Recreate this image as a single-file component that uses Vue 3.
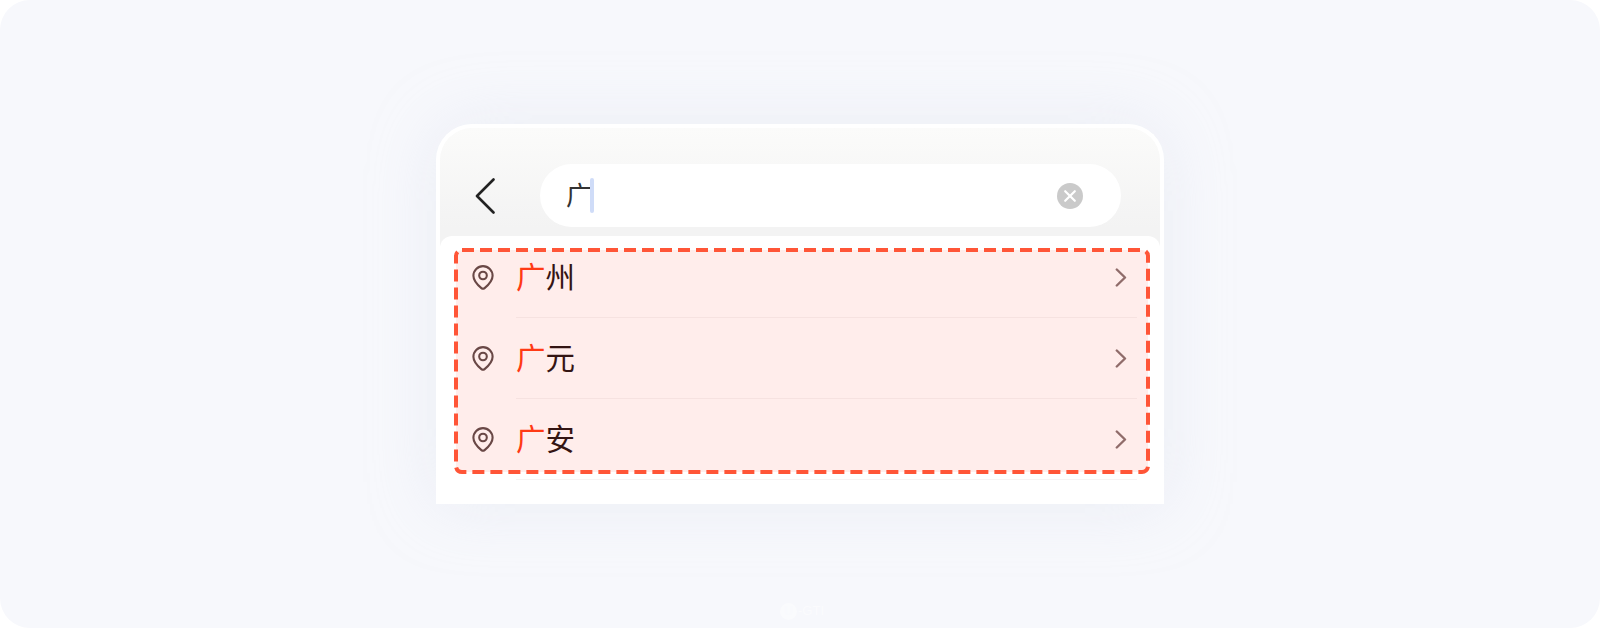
<template>
  <div class="stage">
    <div class="card">
      <div class="search-bar">
        <svg class="back" width="20" height="36" viewBox="0 0 20 36">
          <path d="M18.5 1.500 2 18l16.500 16.500" fill="none" stroke="#222" stroke-width="2.600" stroke-linecap="round" stroke-linejoin="round" />
        </svg>
        <div class="pill">
          <span class="query">广</span>
          <span class="caret"></span>
          <svg class="clear" width="26" height="26" viewBox="0 0 26 26">
            <circle cx="13" cy="13" r="13" fill="#cacaca" />
            <path d="M8.200 8.200l9.600 9.600M17.800 8.200l-9.600 9.600" stroke="#fff" stroke-width="2.200" stroke-linecap="round" />
          </svg>
        </div>
      </div>
      <div class="panel">
        <div class="row" v-for="city in cities" :key="city">
          <svg class="pin" width="22" height="25" viewBox="0 0 22 25">
            <path d="M11 23.800c-.6 0-1.100-.3-1.600-.7C5.800 20.100 1.400 16.200 1.400 10.700a9.600 9.600 0 0 1 19.200 0c0 5.500-4.400 9.400-8 12.400-.5.400-1 .7-1.600.7z" fill="none" stroke="#5b4a4a" stroke-width="2.100" stroke-linejoin="round" />
            <circle cx="11" cy="10.500" r="3.800" fill="none" stroke="#5b4a4a" stroke-width="2.100" />
          </svg>
          <div class="row-body">
            <span class="name"><em>广</em>{{ city }}</span>
            <svg class="more" width="12" height="19" viewBox="0 0 12 19">
              <path d="M1.800 1.500 10 9.500l-8.200 8" fill="none" stroke="#857272" stroke-width="2.400" stroke-linecap="round" stroke-linejoin="round" />
            </svg>
          </div>
        </div>
      </div>
      <svg class="marker" width="696" height="226" viewBox="0 0 696 226">
        <rect x="2" y="2" width="692" height="222" rx="6" fill="#ff3b1f" fill-opacity="0.09" stroke="#ff5537" stroke-width="4" stroke-dasharray="12 6" />
      </svg>
    </div>
    <div class="brand">
      <span class="brand-mark">U</span>
      <span>-GTI</span>
    </div>
  </div>
</template>

<script setup>
const cities = ['州', '元', '安']
</script>

<style>
body {
  background: #fff;
}
</style>

<style scoped>
.stage {
  position: relative;
  box-sizing: border-box;
  width: 1600px;
  height: 628px;
  padding-top: 124px;
  border-radius: 30px;
  background: #f7f8fc;
  overflow: hidden;
  font-family: "Liberation Sans", "Noto Sans CJK SC", sans-serif;
}

.card {
  position: relative;
  box-sizing: border-box;
  width: 728px;
  height: 380px;
  margin: 0 auto;
  border: 4px solid #fff;
  border-bottom: 0;
  border-radius: 36px 36px 0 0;
  background: linear-gradient(180deg, #fbfbfa 0%, #f3f3f3 100px);
  box-shadow: 0 0 66px rgba(214, 218, 234, 0.36);
}

.search-bar {
  display: flex;
  align-items: center;
  height: 63px;
  margin: 36px 0 9px;
  padding-left: 35px;
}

.back {
  flex: none;
}

.pill {
  display: flex;
  align-items: center;
  box-sizing: border-box;
  width: 581px;
  height: 63px;
  margin-left: 45px;
  padding: 0 25px 0 26px;
  border-radius: 32px;
  background: #fff;
}

.query {
  font-size: 26px;
  line-height: 36px;
  color: #333;
}

.caret {
  width: 4px;
  height: 35px;
  margin-left: -2px;
  border-radius: 2px;
  background: #cfdcf8;
}

.clear {
  margin-left: auto;
  margin-right: 13px;
}

.panel {
  box-sizing: border-box;
  height: 268px;
  padding-top: 1px;
  border-radius: 12px 12px 0 0;
  background: #fff;
}

.row {
  display: flex;
  align-items: center;
  height: 81px;
  padding-left: 32px;
}

.pin {
  flex: none;
}

.row-body {
  display: flex;
  flex: 1;
  align-items: center;
  justify-content: space-between;
  box-sizing: border-box;
  height: 81px;
  margin: 0 23px 0 22px;
  padding-right: 10px;
  border-bottom: 1px solid #f6f3f3;
}

.name {
  padding-top: 2px;
  font-size: 29.500px;
  line-height: 40px;
  color: #1f1212;
}

.name em {
  font-style: normal;
  color: #ff3b14;
}

.marker {
  position: absolute;
  left: 14px;
  top: 120px;
}

.brand {
  position: absolute;
  left: 780px;
  top: 602px;
  display: flex;
  align-items: center;
  gap: 1px;
  font-size: 13px;
  line-height: 18px;
  color: rgba(255, 255, 255, 0.5);
}

.brand-mark {
  width: 17px;
  height: 17px;
  border-radius: 50%;
  background: rgba(255, 255, 255, 0.4);
  color: #f9fafd;
  font-size: 12px;
  line-height: 17px;
  text-align: center;
}
</style>
